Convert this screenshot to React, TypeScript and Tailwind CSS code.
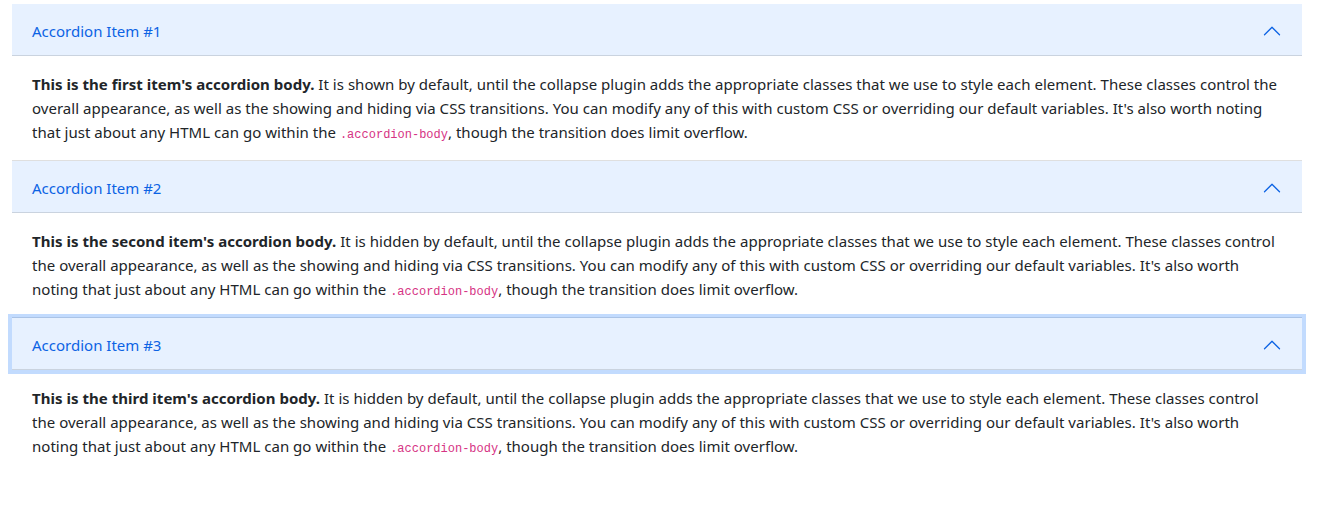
import React from 'react'

const items = [
  { title: 'Accordion Item #1', lead: "This is the first item's accordion body.", verb: 'shown', focused: false },
  { title: 'Accordion Item #2', lead: "This is the second item's accordion body.", verb: 'hidden', focused: false },
  { title: 'Accordion Item #3', lead: "This is the third item's accordion body.", verb: 'hidden', focused: true },
]

const Chevron = () => (
  <svg width="20" height="20" viewBox="0 0 16 16" fill="#0c63e4" className="rotate-180 shrink-0">
    <path
      fillRule="evenodd"
      d="M1.646 4.646a.5.5 0 0 1 .708 0L8 10.293l5.646-5.647a.5.5 0 0 1 .708.708l-6 6a.5.5 0 0 1-.708 0l-6-6a.5.5 0 0 1 0-.708z"
    />
  </svg>
)

const App = () => {
  return (
    <div className="bg-white min-h-[522px] pt-1 pl-3 pr-4 font-['Noto_Sans',sans-serif] text-[15px] text-[#212529]">
      <div className="w-[1290px]">
        {items.map((item, i) => (
          <div key={item.title} className={i < items.length - 1 ? 'border-b border-[#dfdfdf]' : ''}>
            {/* Header */}
            <button
              className={
                'relative w-full h-[52px] flex items-center justify-between px-5 pt-[2px] bg-[#e7f1ff] text-[#0c63e4] text-left border-b border-[#cad3df] ' +
                (item.focused ? 'z-10 shadow-[0_0_0_4px_rgba(13,110,253,0.25)]' : '')
              }
            >
              <span className="leading-6">{item.title}</span>
              <Chevron />
            </button>
            {/* Body */}
            <div className="px-5 pt-4 pb-4 leading-6 tracking-[0.025px]">
              <strong className="font-bold">{item.lead}</strong> It is {item.verb} by default, until the collapse plugin
              adds the appropriate classes that we use to style each element. These classes control the overall
              appearance, as well as the showing and hiding via CSS transitions. You can modify any of this with custom
              CSS or overriding our default variables. It's also worth noting that just about any HTML can go within the{' '}
              <code className="font-['Liberation_Mono',monospace] text-[12px] leading-none tracking-normal text-[#d63384]">
                .accordion-body
              </code>
              , though the transition does limit overflow.
            </div>
          </div>
        ))}
      </div>
    </div>
  )
}

export default App
